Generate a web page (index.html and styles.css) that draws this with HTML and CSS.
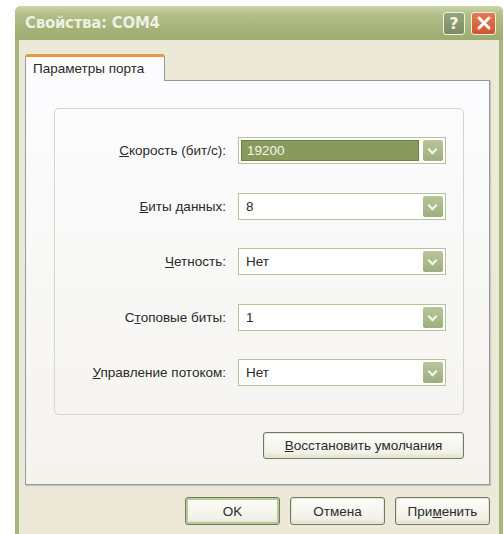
FILE: index.html
```html
<!DOCTYPE html>
<html lang="ru">
<head>
<meta charset="utf-8">
<title>Свойства: COM4</title>
<link rel="stylesheet" href="styles.css">
</head>
<body>
<div class="window">
  <div class="titlebar">
    <span class="title">Свойства: COM4</span>
    <div class="caption-buttons">
      <span class="cap-btn help">?</span>
      <span class="cap-btn close">
        <svg width="16" height="16" viewBox="0 0 16 16"><path d="M3 3 L13 13 M13 3 L3 13" stroke="#fff" stroke-width="3" stroke-linecap="round"/></svg>
      </span>
    </div>
  </div>
  <div class="client">
    <div class="tabs">
      <div class="tab active">Параметры порта</div>
    </div>
    <div class="panel">
      <div class="group">
        <label class="lbl"><u>С</u>корость (бит/с):</label>
        <div class="combo selected"><span class="value">19200</span><span class="drop"></span></div>

        <label class="lbl"><u>Б</u>иты данных:</label>
        <div class="combo"><span class="value">8</span><span class="drop"></span></div>

        <label class="lbl"><u>Ч</u>етность:</label>
        <div class="combo"><span class="value">Нет</span><span class="drop"></span></div>

        <label class="lbl">С<u>т</u>оповые биты:</label>
        <div class="combo"><span class="value">1</span><span class="drop"></span></div>

        <label class="lbl"><u>У</u>правление потоком:</label>
        <div class="combo"><span class="value">Нет</span><span class="drop"></span></div>
      </div>
      <div class="restore-row">
        <button class="btn restore"><u>В</u>осстановить умолчания</button>
      </div>
    </div>
    <div class="footer">
      <button class="btn default">OK</button>
      <button class="btn">Отмена</button>
      <button class="btn">При<u>м</u>енить</button>
    </div>
  </div>
</div>
</body>
</html>
```
FILE: styles.css
```css
html, body {
  margin: 0;
  padding: 0;
  background: #ffffff;
  overflow: hidden;
}

body {
  width: 504px;
  height: 534px;
  font-family: "Liberation Sans", Arial, sans-serif;
  font-size: 14px;
  color: #2a2a2a;
}

.window {
  margin: 6px 0 0 15px;
  width: 488px;
  height: 540px;
  display: flex;
  flex-direction: column;
  background: #a9b680;
  border-radius: 6px 6px 0 0;
  box-sizing: border-box;
}

/* caption */
.titlebar {
  height: 34px;
  flex: none;
  display: flex;
  align-items: center;
  justify-content: space-between;
  padding: 0 7px 0 10px;
  border-radius: 6px 6px 0 0;
  background: linear-gradient(#cbd4a8 0%, #b3bf88 25%, #a7b47b 60%, #9dab6f 100%);
}

.title {
  font-family: "DejaVu Sans", sans-serif;
  font-weight: bold;
  font-size: 15px;
  color: #eef0e2;
  text-shadow: 0 0 2px #a1ad78;
  letter-spacing: -0.3px;
}

.caption-buttons {
  display: flex;
  gap: 6px;
}

.cap-btn {
  width: 22px;
  height: 23px;
  box-sizing: border-box;
  border: 1px solid #eef2e0;
  border-radius: 3px;
  display: flex;
  align-items: center;
  justify-content: center;
}

.help {
  background: linear-gradient(#95a67c, #7a8d64);
  color: #f3f5ec;
  font-family: "DejaVu Sans", sans-serif;
  font-weight: bold;
  font-size: 16px;
}

.close {
  width: 25px;
  background: linear-gradient(#e47a55, #cf5531);
}

/* client area */
.client {
  flex: 1;
  margin: 0 4px 0 4px;
  background: #ece9d8;
  display: flex;
  flex-direction: column;
  padding: 14px 9px 0 6px;
}

.tabs {
  display: flex;
  height: 26px;
  position: relative;
  z-index: 1;
}

.tab {
  width: 140px;
  box-sizing: border-box;
  background: #fcfcfe;
  border: 1px solid #919b9c;
  border-bottom: none;
  border-top: 3px solid #e79a44;
  border-radius: 3px 3px 0 0;
  padding: 4px 0 0 7px;
  font-size: 13.5px;
  height: 27px;
}

.panel {
  height: 405px;
  box-sizing: border-box;
  border: 1px solid #919b9c;
  background: linear-gradient(#fcfcfe, #f4f3ee);
  box-shadow: 1px 1px 1px #c9c7b8;
  display: flex;
  flex-direction: column;
  padding: 27px 25px 0 28px;
}

.group {
  height: 307px;
  box-sizing: border-box;
  border: 1px solid #d6d5c6;
  border-radius: 5px;
  display: grid;
  grid-template-columns: 171px 208px;
  grid-auto-rows: 27px;
  row-gap: 28.5px;
  column-gap: 12px;
  padding: 28px 0 0 0;
  align-items: center;
}

.lbl {
  text-align: right;
  white-space: nowrap;
  font-size: 13.5px;
}

.combo {
  height: 27px;
  box-sizing: border-box;
  border: 1px solid #b7c29c;
  background: #ffffff;
  display: flex;
  align-items: stretch;
  padding: 2px;
}

.combo .value {
  flex: 1;
  display: flex;
  align-items: center;
  padding-left: 5px;
  font-size: 13.5px;
}

.combo.selected .value {
  background: #889a5c;
  color: #f4f6ea;
  margin-right: 4px;
  border: 1px solid #6f7f48;
}

.drop {
  width: 20px;
  background: linear-gradient(#b7c59b, #9daf7d);
  border-radius: 2px;
  position: relative;
}

.drop::after {
  content: "";
  position: absolute;
  left: 6px;
  top: 6px;
  width: 5px;
  height: 5px;
  border-right: 2px solid #f6f8ee;
  border-bottom: 2px solid #f6f8ee;
  transform: rotate(45deg);
}

.restore-row {
  display: flex;
  justify-content: flex-end;
  padding: 17px 0 0 0;
}

/* push buttons */
.btn {
  font-family: "Liberation Sans", Arial, sans-serif;
  font-size: 13.5px;
  color: #2a2a2a;
  height: 28px;
  width: 95px;
  box-sizing: border-box;
  border: 1px solid #6f7a5e;
  border-radius: 3px;
  background: linear-gradient(#fdfdf9, #f2f1e7 80%, #dedcc9);
  box-shadow: inset 0 0 0 1px #e8e6d6;
  padding: 0;
  cursor: default;
}

.restore {
  width: 201px;
  height: 27px;
}

.btn.default {
  box-shadow: inset 0 0 0 2px #b9c995;
}

.footer {
  display: flex;
  justify-content: flex-end;
  gap: 10px;
  padding: 12px 0 0 0;
}
```
